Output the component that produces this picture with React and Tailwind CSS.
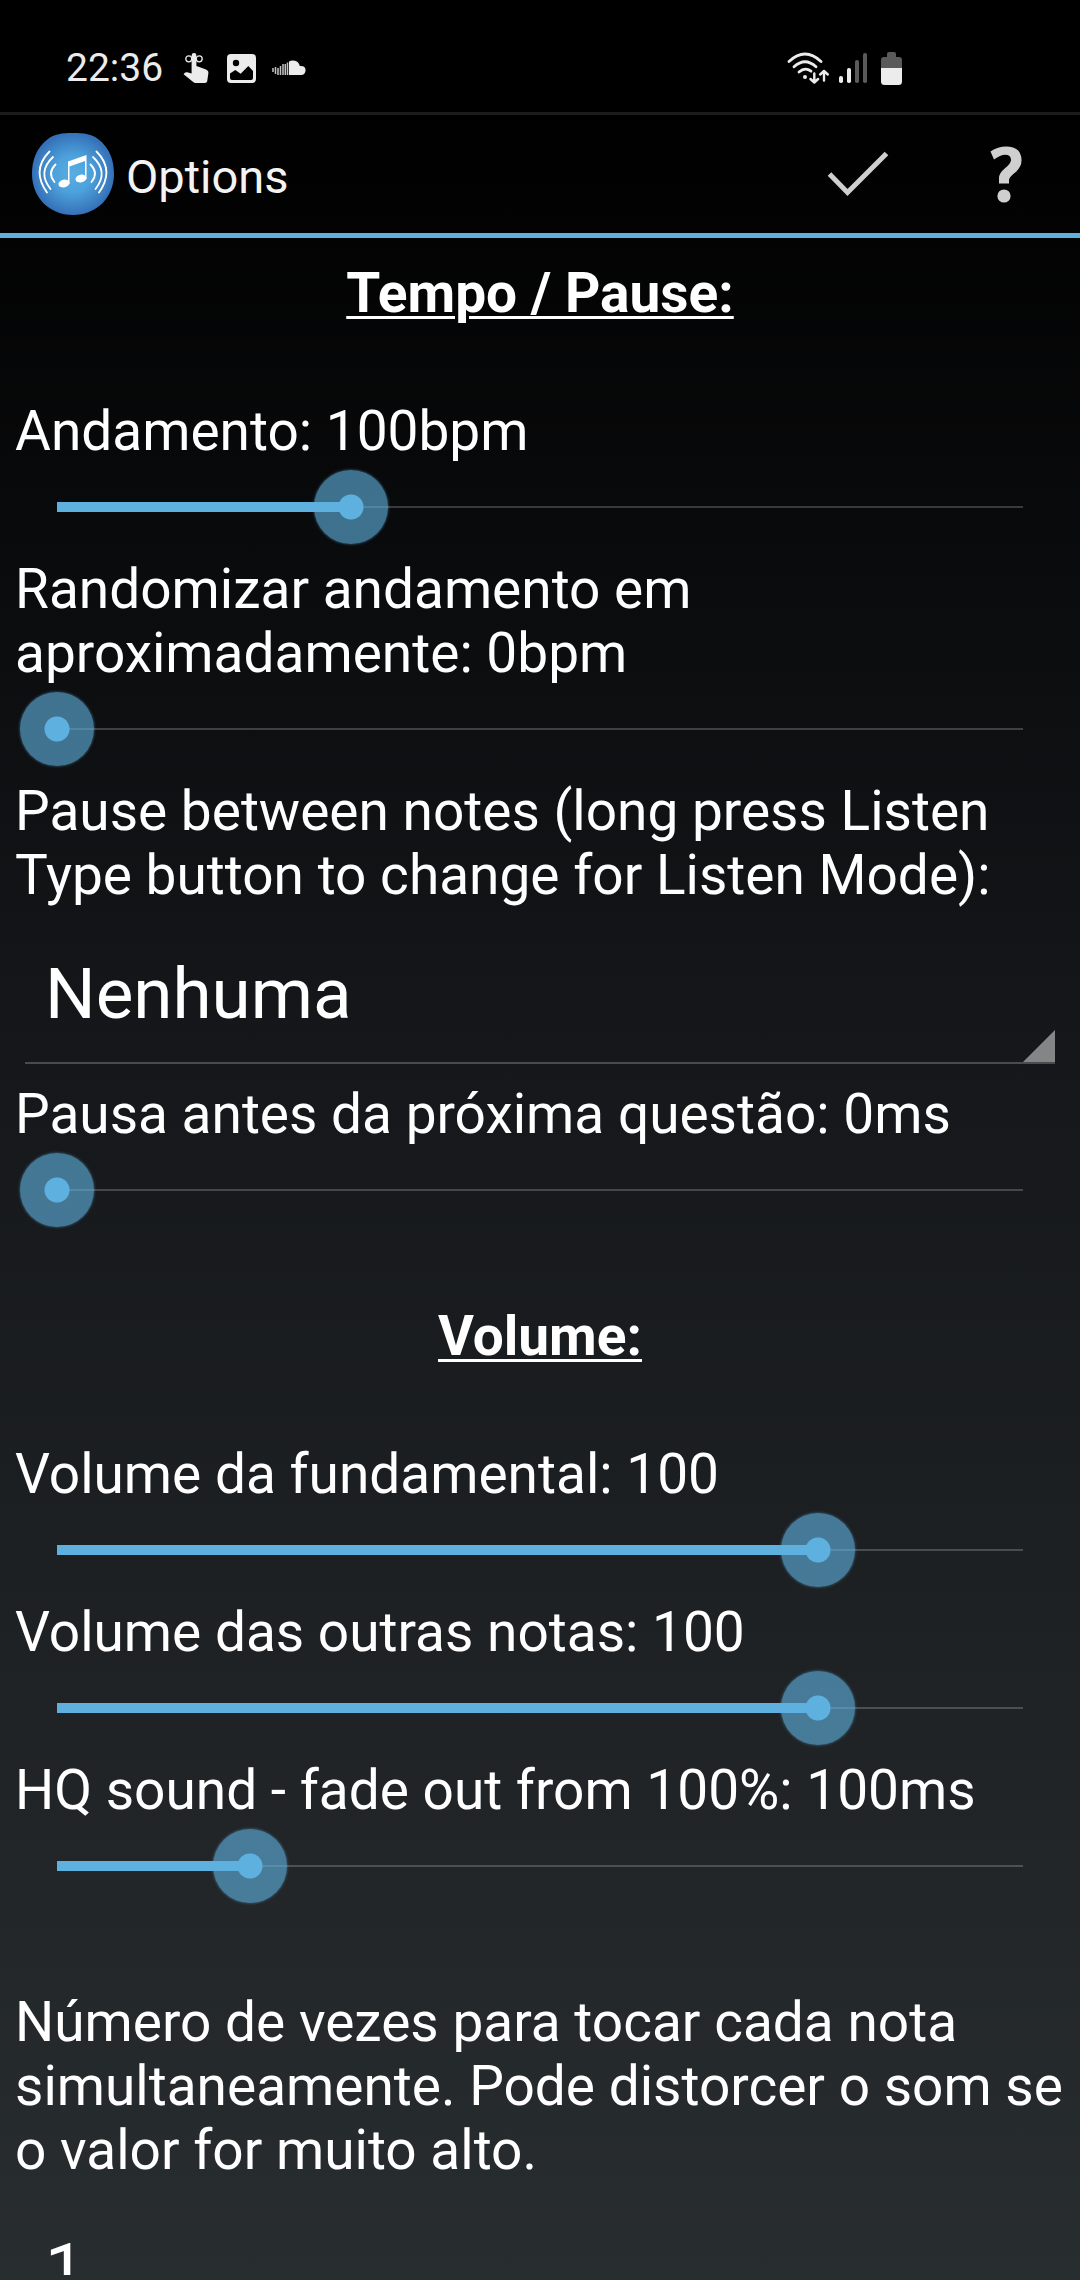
import { useState } from 'react';

/* --- ICONS --- */

function ReminderIcon() {
    return (
        <svg viewBox="0 0 26 32" className="h-8 w-[26px]" fill="#ececec" aria-hidden="true">
            <path d="M8.6 3.4Q8.6 1 11 1t2.4 2.4V14l9 3.2Q25.6 18.4 25.4 21l-1.2 8.2Q23.8 31 22 31H12.6q-1.4 0-2.4-1L.6 22.2l1.2-1.4q1-.9 2.4-.6l4.4 1.4z" />
            <g fill="none" stroke="#ececec" strokeWidth="1.3">
                <circle cx="5.8" cy="6.8" r="3" />
                <circle cx="16.2" cy="6.8" r="3" />
            </g>
        </svg>
    );
}

function PictureIcon() {
    return (
        <svg viewBox="0 0 29 29" className="h-[29px] w-[29px]" aria-hidden="true">
            <rect width="29" height="29" rx="4" fill="#ececec" />
            <circle cx="9" cy="9" r="3.2" fill="#000" />
            <path d="M3 19.5 8.3 16l5.4 3.8 7.6-7.9L26 17v7q0 2-2 2H5q-2 0-2-2z" fill="#000" />
        </svg>
    );
}

function CloudIcon() {
    return (
        <svg viewBox="0 0 34 16" className="h-4 w-[34px]" aria-hidden="true">
            <path d="M17 1.4Q19 .4 21.4.6 26.6 1 27.8 6q5.700-.6 5.800 4.200Q33.400 14.800 29 15H17z" fill="#ececec" />
            <g stroke="#c4c4c4" strokeWidth="1.5">
                <path d="M1 8v4M3.500 7v7M6 8v7M8.500 6v9M11 4v11M13.300 4v11M15.500 2.500V15" />
            </g>
        </svg>
    );
}

function WifiIcon() {
    return (
        <svg viewBox="0 0 42 32" className="h-8 w-[42px]" fill="none" stroke="#ececec" strokeLinecap="round" aria-hidden="true">
            <g strokeWidth="2.8">
                <path d="M2 9.500Q18 -5.500 34 9.500" />
                <path d="M7 14.800Q18 4.600 29 14.800" />
                <path d="M12 20Q18 14.600 24 19.200" />
            </g>
            <circle cx="18" cy="25" r="2" fill="#ececec" stroke="none" />
            <g strokeWidth="2.4" strokeLinejoin="round">
                <path d="M27.300 21.500v9M23.500 27l3.800 3.500 3.800-3.500" />
                <path d="M37 28.500v-9.500M33.200 22.500 37 19l3.800 3.500" />
            </g>
        </svg>
    );
}

function SignalIcon() {
    return (
        <svg viewBox="0 0 28 30" className="h-[30px] w-7" aria-hidden="true">
            <rect x="0" y="23" width="4" height="7" rx="1.8" fill="#ececec" />
            <rect x="8" y="15" width="4" height="15" rx="1.8" fill="#ececec" />
            <rect x="16" y="7" width="4" height="23" rx="1.8" fill="#5a5a5a" />
            <rect x="24" y="0" width="4" height="30" rx="1.8" fill="#5a5a5a" />
        </svg>
    );
}

function BatteryIcon() {
    return (
        <svg viewBox="0 0 21 33" className="h-[33px] w-[21px]" aria-hidden="true">
            <path d="M0 16V8q0-3 3-3h3V2q0-2 2-2h5q2 0 2 2v3h3q3 0 3 3v8z" fill="#5a5a5a" />
            <path d="M0 16h21v13.500q0 3.500-3.500 3.500h-14Q0 33 0 29.500z" fill="#ececec" />
        </svg>
    );
}

function AppLogo() {
    return (
        <svg viewBox="0 0 82 82" className="h-[82px] w-[82px]" aria-hidden="true">
            <defs>
                <radialGradient id="logo-glow">
                    <stop offset="0" stopColor="#58ade2" />
                    <stop offset="0.45" stopColor="#4da2dc" />
                    <stop offset="1" stopColor="#3571b8" />
                </radialGradient>
            </defs>
            <path d="M41 0C52 0 60 1 66 6 78 15 82 28 82 41 82 64 65 82 41 82S0 64 0 41C0 28 4 15 16 6 22 1 30 0 41 0z" fill="url(#logo-glow)" />
            <g fill="none" stroke="#fff" strokeWidth="1.8" strokeLinecap="round">
                <path d="M17.500 18.500Q-1 37 15 59.500" />
                <path d="M21 24Q5 39 18.500 56" />
                <path d="M23.500 31.500Q15 40 22.500 49" />
                <path d="M64.500 18.500Q83 37 67 59.500" />
                <path d="M61 24Q77 39 63.500 56" />
                <path d="M58.500 31.500Q67 40 59.500 49" />
            </g>
            <g fill="#fff">
                <path d="M36 28.500 54.500 22V46h-1.500V28L37.500 33.500V51H36z" />
                <ellipse cx="32" cy="50.5" rx="5.6" ry="3.9" transform="rotate(-12 32 50.5)" />
                <ellipse cx="49" cy="45.5" rx="5.6" ry="3.9" transform="rotate(-12 49 45.5)" />
            </g>
        </svg>
    );
}

function CheckIcon() {
    return (
        <svg viewBox="0 0 62 46" className="h-[46px] w-[62px]" fill="none" stroke="#cfcfcf" strokeWidth="5" aria-hidden="true">
            <path d="M2.500 23 20.500 41.500 59.500 2.500" />
        </svg>
    );
}

function HelpIcon() {
    return (
        <svg viewBox="0 0 32 57" className="h-[57px] w-8" fill="#cfcfcf" aria-hidden="true">
            <path d="M.5 5.500Q8 .5 16 .5 31.500.5 31.500 14.500q0 7-7 12.500Q19 31.500 19 34v3.500H9V32q0-5 6-9.800 6-4.700 6-8.200 0-5.200-6-5.200-4.500 0-11 4.700z" />
            <circle cx="14" cy="50" r="6.6" />
        </svg>
    );
}

/* --- CONTROLS --- */

function SectionTitle({ children }) {
    return (
        <h2 className="mb-[74px] text-center font-bold underline decoration-3 underline-offset-4">
            {children}
        </h2>
    );
}

function SliderOption({ id, label, unit = '', min = 0, max, initial }) {
    const [value, setValue] = useState(initial);
    const percent = ((value - min) / (max - min)) * 100;

    return (
        <div className="pb-1.5">
            <label htmlFor={id} className="block px-[15px]">
                {`${label}: ${value}${unit}`}
            </label>
            <div className="mx-5 grid h-[88px] items-center">
                <div className="col-start-1 row-start-1 mx-[37px] flex h-2.5 items-center bg-[linear-gradient(rgba(255,255,255,0.2),rgba(255,255,255,0.2))] bg-[length:100%_2px] bg-center bg-no-repeat">
                    <div className="h-full bg-[#5eb1df]" style={{ width: `${percent}%` }} />
                </div>
                <input
                    id={id}
                    type="range"
                    min={min}
                    max={max}
                    value={value}
                    onChange={(e) => setValue(Number(e.target.value))}
                    className="z-10 col-start-1 row-start-1 m-0 h-[74px] w-full cursor-pointer appearance-none bg-transparent [&::-webkit-slider-thumb]:h-[74px] [&::-webkit-slider-thumb]:w-[74px] [&::-webkit-slider-thumb]:appearance-none [&::-webkit-slider-thumb]:rounded-full [&::-webkit-slider-thumb]:bg-[radial-gradient(circle,#5eb1df_0_12px,rgba(94,177,223,0.62)_13px)] [&::-webkit-slider-thumb]:shadow-[0_0_3px_rgba(94,177,223,0.6)]"
                />
            </div>
        </div>
    );
}

function SelectOption({ id, label, options }) {
    return (
        <div className="pb-[18px]">
            <label htmlFor={id} className="block px-[15px]">
                {label}
            </label>
            <div className="relative mx-[25px] border-b-2 border-[#4a4b4d]">
                <select id={id} className="block h-[155px] w-full appearance-none bg-transparent pt-[45px] pb-[26px] pl-5 text-[71px] leading-[84px] text-white">
                    {options.map((option) => (
                        <option key={option}>{option}</option>
                    ))}
                </select>
                <svg viewBox="0 0 32 32" className="pointer-events-none absolute right-0 bottom-0 h-8 w-8" aria-hidden="true">
                    <path d="M32 0v32H0z" fill="#848587" />
                </svg>
            </div>
        </div>
    );
}

/* --- SCREEN --- */

function StatusBar() {
    return (
        <div className="flex h-[115px] shrink-0 items-center justify-between border-b-3 border-[#1c1c1c] bg-black pt-6 pr-[178px] pl-[66px]">
            <div className="flex items-center">
                <span className="text-[39px] text-[#ececec]">22:36</span>
                <div className="ml-5 flex items-center gap-[18px]">
                    <ReminderIcon />
                    <PictureIcon />
                    <div className="-ml-0.5">
                        <CloudIcon />
                    </div>
                </div>
            </div>
            <div className="flex items-center">
                <WifiIcon />
                <div className="ml-2.5">
                    <SignalIcon />
                </div>
                <div className="ml-3.5">
                    <BatteryIcon />
                </div>
            </div>
        </div>
    );
}

function App() {
    return (
        <div className="flex h-screen flex-col overflow-hidden bg-[linear-gradient(#000000_5%,#15171a_46%,#282d30)] pb-[5px] font-['Roboto',sans-serif] text-[55px] leading-[64px] text-white">
            <StatusBar />

            <header className="flex h-[123px] shrink-0 items-center border-b-5 border-[#5eb1df] pr-[58px] pl-8">
                <AppLogo />
                <h1 className="ml-3 flex-1 pt-1.5 text-[47px] text-[#f3f3f3]">Options</h1>
                <button type="button" aria-label="OK" className="mr-[101px]">
                    <CheckIcon />
                </button>
                <button type="button" aria-label="Help">
                    <HelpIcon />
                </button>
            </header>

            <main className="min-h-0 flex-1 overflow-hidden pt-[23px]">
                <section className="pb-16">
                    <SectionTitle>Tempo / Pause:</SectionTitle>
                    <SliderOption id="tempo" label="Andamento" unit="bpm" min={30} max={260} initial={100} />
                    <SliderOption id="tempo-random" label="Randomizar andamento em aproximadamente" unit="bpm" max={100} initial={0} />
                    <SelectOption
                        id="note-pause"
                        label="Pause between notes (long press Listen Type button to change for Listen Mode):"
                        options={['Nenhuma']}
                    />
                    <SliderOption id="question-pause" label="Pausa antes da próxima questão" unit="ms" max={5000} initial={0} />
                </section>

                <section className="pb-[74px]">
                    <SectionTitle>Volume:</SectionTitle>
                    <SliderOption id="root-volume" label="Volume da fundamental" max={127} initial={100} />
                    <SliderOption id="other-volume" label="Volume das outras notas" max={127} initial={100} />
                    <SliderOption id="fade-out" label="HQ sound - fade out from 100%" unit="ms" max={500} initial={100} />
                </section>

                <SelectOption
                    id="note-repeat"
                    label="Número de vezes para tocar cada nota simultaneamente. Pode distorcer o som se o valor for muito alto."
                    options={['1', '2', '3', '4']}
                />
            </main>
        </div>
    );
}

export default App;
